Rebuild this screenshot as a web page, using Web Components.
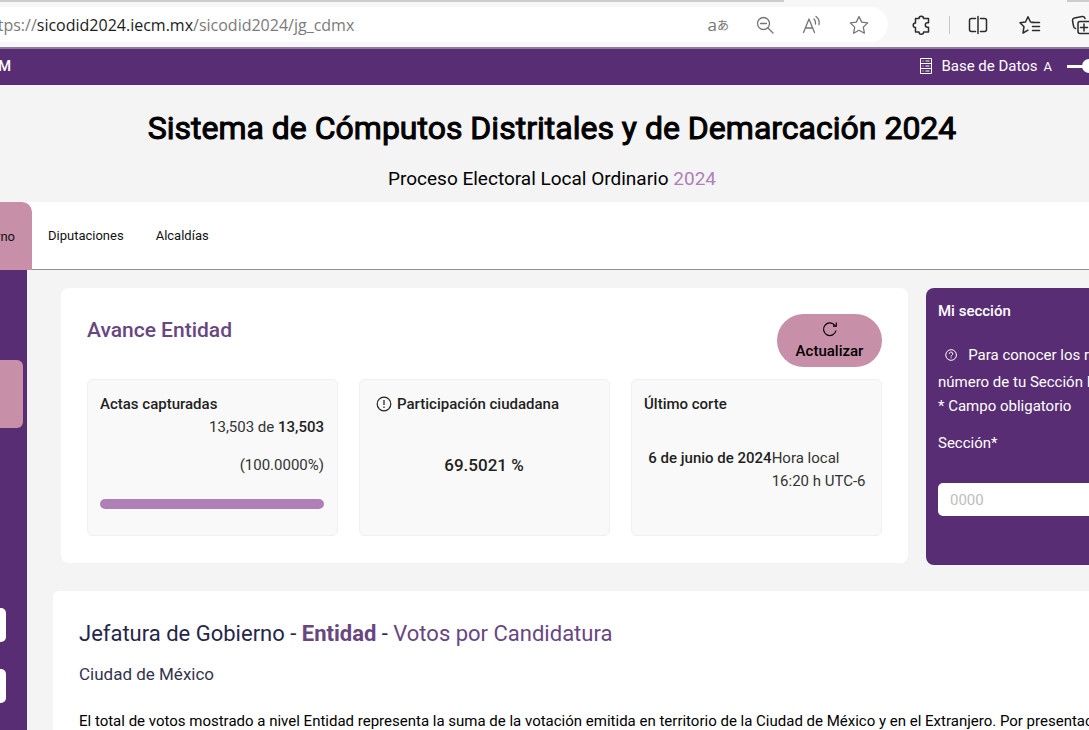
<!DOCTYPE html>
<html lang="es">
<head>
<meta charset="utf-8">
<title>Sistema de Cómputos Distritales y de Demarcación 2024</title>
<style>
:root{--purple:#582d73;--pink:#c78fa8;--lilac:#b07fb8;--ground:#f4f4f4;--ink:#1f1f1f}
html,body{margin:0;height:100%}
body{font:15px/23px Roboto,"Liberation Sans",sans-serif;color:#000;background:#fff;overflow:hidden}
</style>
</head>
<body>
<sicodid-app></sicodid-app>
<script>
function define(name, html, setup) {
  customElements.define(name, class extends HTMLElement {
    connectedCallback() {
      if (this.shadowRoot) return;
      const t = document.createElement('template');
      t.innerHTML = '<style>*{box-sizing:border-box}</style>' + html;
      this.attachShadow({ mode: 'open' }).append(t.content.cloneNode(true));
      if (setup) setup(this);
    }
  });
}

define('browser-toolbar', `
<style>
:host{display:block;background:#f7f7f7;border-bottom:2px solid #8d7d9b;overflow:hidden}
.strip{height:2px;display:flex;background:#cdcdcd}
.strip i{margin-left:auto;margin-right:2%;width:26%;background:#f7f7f7}
.bar{display:flex;align-items:center;height:45px;color:#2b2b2b}
.pill{flex:1;display:flex;align-items:center;justify-content:space-between;height:35px;background:#fff;border-radius:0 18px 18px 0;padding-right:18px;color:#757575;overflow:hidden}
.url{font:16px/22px "Open Sans","Noto Sans",sans-serif;color:#7b7b7b;white-space:nowrap;margin-left:-8px}
.url b{font-weight:400;color:#1b1b1b}
.tools,.right{display:flex;align-items:center}
.tools{gap:25px}
.right{gap:30px;width:201px;padding-left:22px;flex:none;overflow:hidden}
button{border:0;background:none;padding:0;color:inherit;display:flex;align-items:center;font:17px/22px "Open Sans",sans-serif}
button small{font:12px/22px "Noto Sans CJK JP",sans-serif}
svg{width:22px;height:22px;flex:none;fill:none;stroke:currentColor;stroke-width:1.3;stroke-linejoin:round;stroke-linecap:round}
hr{width:1px;height:18px;border:0;margin:0 -13px;background:#c8c8c8;flex:none}
</style>
<div class="strip"><i></i></div>
<div class="bar">
 <div class="pill"><span class="url">ttps://<b>sicodid2024.iecm.mx</b>/sicodid2024/jg_cdmx</span>
  <span class="tools">
   <button aria-label="Traducir">a<small>あ</small></button>
   <button aria-label="Alejar"><svg viewBox="0 0 22 22"><circle cx="9.500" cy="9.500" r="6"/><path d="M14 14l5 5M6.500 9.500h6"/></svg></button>
   <button aria-label="Leer en voz alta"><svg viewBox="0 0 22 22"><path d="M2.500 18.500L8 5l5.500 13.500M4.500 14h7M13 5q2 2 1.500 5M15 2.500q4 3 3 8"/></svg></button>
   <button aria-label="Favorito"><svg viewBox="0 0 22 22"><path d="M11 2.500l2.700 5.600 6 .8-4.400 4.200 1.100 6.100L11 16.300l-5.400 2.900 1.100-6.100-4.400-4.200 6-.8z"/></svg></button>
  </span>
 </div>
 <div class="right">
  <button aria-label="Extensiones"><svg viewBox="0 0 22 22" style="stroke-width:1.500"><path d="M5.500 4.500H9a2.300 2.300 0 0 1 4.600 0H18.500v4.300h-1a2.200 2.200 0 0 0 0 4.400h1V18h-4.900a2.300 2.300 0 0 1-4.600 0H5.500v-4.400a2.300 2.300 0 0 1 0-4.600z"/></svg></button>
  <hr>
  <button aria-label="Pantalla dividida"><svg viewBox="0 0 22 22" style="stroke-width:1.500"><path d="M8.500 4.500H4.500a2 2 0 0 0-2 2v9a2 2 0 0 0 2 2h4M13.500 4.500h4a2 2 0 0 1 2 2v9a2 2 0 0 1-2 2h-4M11 2.500v17"/></svg></button>
  <button aria-label="Lista de favoritos"><svg viewBox="0 0 22 22" style="stroke-width:1.500"><path d="M16 8.500L11.500 8 9 2.800 6.500 8 1 8.700l4 4-1 6.300 5-2.800M12.500 8.500h8M13.500 12.500h7M13.500 16.500h7"/></svg></button>
  <button aria-label="Colecciones"><svg viewBox="0 0 22 22" style="stroke-width:1.500"><path d="M4.500 14.500A3 3 0 0 1 2.500 12L1.500 6.500A2.500 2.500 0 0 1 3.500 4L11 2.500a2.500 2.500 0 0 1 3 2M9 7.500h11v12H9a2 2 0 0 1-2-2v-8a2 2 0 0 1 2-2zM13 10v7M9.500 13.500h7"/></svg></button>
 </div>
</div>`);

define('site-nav', `
<style>
:host{display:flex;align-items:center;justify-content:space-between;height:36px;background:var(--purple);color:#fff;padding-bottom:2px;overflow:hidden}
b{font-weight:500;margin-left:-2px}
nav{display:flex;align-items:center}
a{display:flex;align-items:center;gap:8px;color:inherit;text-decoration:none}
svg{width:14px;height:16px;fill:none;stroke:currentColor}
label{font-size:13px;margin-left:6px;display:flex;align-items:center;gap:15px}
input{appearance:none;width:100px;height:14px;margin:0 -78px 0 0;background:linear-gradient(#fff,#fff) center/100% 3px no-repeat}
input::-webkit-slider-thumb{appearance:none;width:14px;height:14px;border-radius:50%;background:#fff}
</style>
<b>M</b>
<nav><a href="#"><svg viewBox="0 0 14 16"><path d="M1.500.5h11v15h-11zM1.500 5.500h11M1.500 10.500h11M3.500 3h1M6.500 3h4M3.500 8h1M6.500 8h4M3.500 13h1M6.500 13h4"/></svg>Base de Datos</a>
<label>A<input type="range" min="0" max="100" value="18" aria-label="Tamaño"></label></nav>`);

define('site-title', `
<style>
:host{display:block;background:var(--ground);text-align:center;padding:22px 0 11px 15px}
h1{margin:0;font-size:32px;line-height:42px;font-weight:400;-webkit-text-stroke:1px #000}
p{margin:17px 0 0;font-size:19px;line-height:25px}
span{color:var(--lilac)}
</style>
<h1>Sistema de Cómputos Distritales y de Demarcación 2024</h1>
<p>Proceso Electoral Local Ordinario <span>2024</span></p>`);

define('tab-bar', `
<style>
:host{display:flex;height:68px;background:#fff;border-bottom:1px solid #8f8f8f;font-size:13px}
a{display:flex;align-items:center;color:#111;text-decoration:none;padding:0 16px}
a.on{background:var(--pink);width:32px;padding:0 17px 0 0;justify-content:flex-end;border-radius:0 10px 0 0;overflow:hidden;margin-bottom:-1px}
</style>
<a class="on" href="#">rno</a><a href="#">Diputaciones</a><a href="#">Alcaldías</a>`);

define('side-bar', `
<style>
:host{display:block;width:27px;flex:none;background:var(--purple);padding-top:90px}
a{display:block;height:68px;width:23px;background:var(--pink);border-radius:0 6px 6px 0;margin-bottom:180px}
button{display:block;width:6px;height:34px;border:0;padding:0;background:#fff;border-radius:0 5px 5px 0;margin-bottom:27px}
</style>
<a href="#" aria-label="Entidad"></a><button aria-label="Distrito"></button><button aria-label="Sección"></button>`);

define('stat-card', `
<style>
:host{display:block;height:157px;background:#f9f9f9;border:1px solid #f0f0f0;border-radius:6px;padding:12px 13px 12px 12px}
h3{margin:0;font-size:15px;line-height:24px;font-weight:500;color:#1f1f1f;display:flex;align-items:center;gap:5px}
</style>
<h3><slot name="icon"></slot><slot name="title"></slot></h3><slot></slot>`);

define('progress-line', `
<style>:host{display:block;height:10px;border-radius:5px;background:var(--lilac);margin-top:22px}</style>`,
  el => { el.setAttribute('role', 'progressbar'); el.setAttribute('aria-valuenow', '100'); });

define('avance-panel', `
<style>
:host{display:block;background:#fff;border-radius:8px;padding:26px 26px 27px;color:#333}
header{display:flex;justify-content:space-between;align-items:flex-start;margin-bottom:12px}
h2{margin:0;font-size:21px;line-height:32px;font-weight:500;color:#68467f}
button{width:105px;height:53px;border:0;border-radius:27px;background:var(--pink);color:#000;font:500 15px/23px Roboto,sans-serif;padding:4px 0 0;display:flex;flex-direction:column;align-items:center}
button svg{width:16px;height:22px}
svg{fill:none;stroke:currentColor;stroke-width:1.200}
.grid{display:grid;grid-template-columns:repeat(3,1fr);gap:21px}
.right{text-align:right}
b{font-weight:500;color:#1f1f1f}
p{margin:0}
.pct{margin-top:15px}
.big{font-size:17px;text-align:center;margin-top:38px}
.info{width:16px;height:16px;margin-left:4px}
.cut{display:flex;justify-content:center;margin-top:31px}
.cut span{width:92px;white-space:nowrap}
</style>
<header><h2>Avance Entidad</h2><button><svg viewBox="0 0 16 22"><path d="M14 12.500a6.300 6.300 0 1 1-.9-4.700M14.300 4.500v3.700h-3.300"/></svg>Actualizar</button></header>
<div class="grid">
<stat-card><span slot="title">Actas capturadas</span><p class="right">13,503 de <b>13,503</b></p><p class="right pct">(100.0000%)</p><progress-line></progress-line></stat-card>
<stat-card><svg slot="icon" class="info" viewBox="0 0 16 16"><circle cx="8" cy="8" r="6.800"/><path d="M8 4v5M8 10.500v1.500"/></svg><span slot="title">Participación ciudadana</span><p class="big"><b>69.5021 %</b></p></stat-card>
<stat-card><span slot="title">Último corte</span><div class="cut"><b>6 de junio de 2024</b><span>Hora local<br>16:20 h UTC-6</span></div></stat-card>
</div>`);

define('seccion-panel', `
<style>
:host{display:block;background:var(--purple);border-radius:8px 0 0 8px;color:#fff;padding:11px 0 0 12px;overflow:hidden;height:277px;white-space:nowrap}
h2{margin:0 0 17px;font-size:15px;line-height:24px;font-weight:500}
p{margin:0}
.help{line-height:30px;display:flex;align-items:center}
.two{line-height:25px}
svg{width:16px;height:16px;margin:0 11px 0 7px;fill:none;stroke:currentColor;stroke-width:1.300}
label{display:block;margin-top:14px}
input{display:block;width:100%;height:33px;margin-top:28px;border:0;border-radius:5px 0 0 5px;background:#fff;padding:0 12px;font:15px Roboto,sans-serif}
input::placeholder{color:#bdbdbd;opacity:1}
</style>
<h2>Mi sección</h2>
<p class="help"><svg viewBox="0 0 16 16"><circle cx="8" cy="8" r="7"/><path d="M5.800 6.500a2.200 2.200 0 1 1 3.400 1.700Q8 9 8 10M8 11v1.300"/></svg>Para conocer los r</p>
<p class="two">número de tu Sección E</p>
<p>* Campo obligatorio</p>
<label for="s">Sección*</label><input id="s" placeholder="0000">`);

define('votos-panel', `
<style>
:host{display:block;flex:1;background:#fff;border-radius:6px 0 0 0;padding:27px 0 0 26px;overflow:hidden;white-space:nowrap}
h2{margin:0;font-size:22px;line-height:32px;font-weight:400;color:#26264a}
h3{margin:12px 0 24px;font-size:17px;line-height:24px;font-weight:400;color:#33334f}
b{font-weight:700;color:#68467f}
span{color:#68467f}
p{margin:0}
</style>
<h2>Jefatura de Gobierno - <b>Entidad</b> - <span>Votos por Candidatura</span></h2>
<h3>Ciudad de México</h3>
<p>El total de votos mostrado a nivel Entidad representa la suma de la votación emitida en territorio de la Ciudad de México y en el Extranjero. Por presentación</p>`);

define('sicodid-app', `
<style>
:host{display:flex;flex-direction:column;height:100vh}
.body{flex:1;display:flex;min-height:0;background:var(--ground)}
main{flex:1;min-width:0;display:flex;flex-direction:column;padding:18px 0 0 26px;overflow:hidden}
.top{display:grid;grid-template-columns:minmax(0,847fr) minmax(0,163fr);gap:18px;align-items:start;padding-left:8px;margin-bottom:26px}
</style>
<browser-toolbar></browser-toolbar>
<site-nav></site-nav>
<site-title></site-title>
<tab-bar></tab-bar>
<div class="body"><side-bar></side-bar>
<main><div class="top"><avance-panel></avance-panel><seccion-panel></seccion-panel></div><votos-panel></votos-panel></main></div>`);
</script>
</body>
</html>
